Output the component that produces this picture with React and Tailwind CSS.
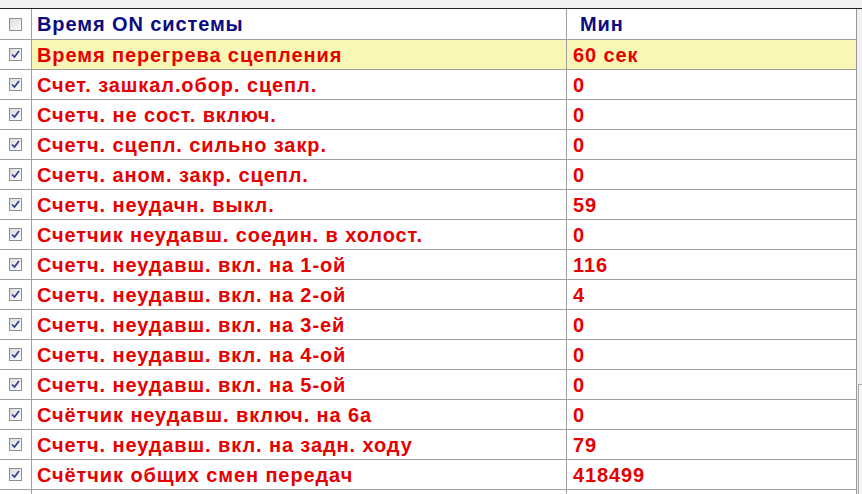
import React from "react";

const rows = [
  ["Время перегрева сцепления", "60 сек", true],
  ["Счет. зашкал.обор. сцепл.", "0"],
  ["Счетч. не сост. включ.", "0"],
  ["Счетч. сцепл. сильно закр.", "0"],
  ["Счетч. аном. закр. сцепл.", "0"],
  ["Счетч. неудачн. выкл.", "59"],
  ["Счетчик неудавш. соедин. в холост.", "0"],
  ["Счетч. неудавш. вкл. на 1-ой", "116"],
  ["Счетч. неудавш. вкл. на 2-ой", "4"],
  ["Счетч. неудавш. вкл. на 3-ей", "0"],
  ["Счетч. неудавш. вкл. на 4-ой", "0"],
  ["Счетч. неудавш. вкл. на 5-ой", "0"],
  ["Счётчик неудавш. включ. на 6а", "0"],
  ["Счетч. неудавш. вкл. на задн. ходу", "79"],
  ["Счётчик общих смен передач", "418499"],
];

function Box({ checked }) {
  return (
    <div className="w-[13px] h-[13px] border border-[#8e8f8f] bg-gradient-to-br from-[#dcdcdc] to-[#fbfbfb] flex items-center justify-center">
      {checked && (
        <svg width="9" height="9" viewBox="0 0 9 9">
          <path d="M1 4.5 L3.5 7 L8 1" fill="none" stroke="#2a3a8c" strokeWidth="1.6" />
        </svg>
      )}
    </div>
  );
}

const App = () => {
  return (
    <div
      className="w-[862px] h-[494px] overflow-hidden bg-white flex flex-col"
      style={{ fontFamily: '"Liberation Sans", Arial, sans-serif' }}
    >
      {/* top strip */}
      <div className="h-[8px] bg-[#f0f0f0] shrink-0" />
      <div className="h-px bg-[#222] shrink-0" />

      <div className="flex flex-1 min-h-0">
        {/* table */}
        <div className="w-[857px] border-r border-[#999] flex flex-col font-bold text-[20px] tracking-[0.9px]">
          {/* header */}
          <div className="flex h-[31px] border-b border-[#a0a0a0] shrink-0">
            <div className="w-[32px] border-r border-[#a0a0a0] flex items-center justify-center">
              <Box />
            </div>
            <div className="w-[535px] border-r border-[#a0a0a0] pl-[5px] flex items-center text-[#0c0c7e]">
              Время ON системы
            </div>
            <div className="flex-1 pl-[13px] flex items-center text-[#0c0c7e]">Мин</div>
          </div>

          {rows.map(([name, val, hl], i) => (
            <div
              key={i}
              className={`flex h-[30px] border-b border-[#a0a0a0] shrink-0 text-[#e60000] ${
                hl ? "bg-[#f8f7b6]" : ""
              }`}
            >
              <div className="w-[32px] border-r border-[#a0a0a0] flex items-center justify-center bg-white">
                <Box checked />
              </div>
              <div className="w-[535px] border-r border-[#a0a0a0] pl-[5px] flex items-center">
                {name}
              </div>
              <div className="flex-1 pl-[6px] flex items-center">{val}</div>
            </div>
          ))}

          {/* partial row */}
          <div className="flex flex-1">
            <div className="w-[32px] border-r border-[#a0a0a0]" />
            <div className="w-[535px] border-r border-[#a0a0a0]" />
          </div>
        </div>

        {/* right edge / scrollbar */}
        <div className="flex-1 bg-[#f0f0f0] flex flex-col">
          <div className="h-[375px]" />
          <div className="flex-1 ml-[1px] border-l border-t border-[#a8a8a8] bg-[#f7f7f7]" />
        </div>
      </div>
    </div>
  );
};

export default App;
